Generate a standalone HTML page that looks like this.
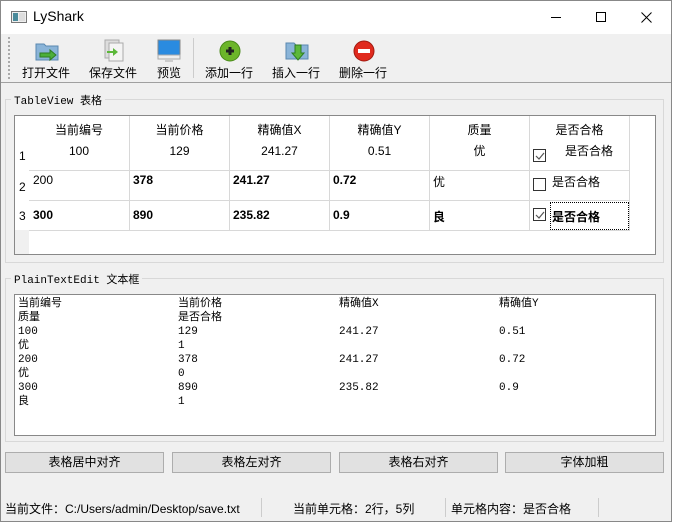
<!DOCTYPE html>
<html><head><meta charset="utf-8">
<style>
*{margin:0;padding:0;box-sizing:border-box}
body{width:674px;height:525px;background:#fff;font-family:"Liberation Sans","Noto Sans CJK SC",sans-serif;font-size:12px;color:#000;position:relative;overflow:hidden}
.a{position:absolute}
.win{left:0;top:0;width:672px;height:522px;border:1px solid #888;background:#f0f0f0}
.title{left:1px;top:1px;width:670px;height:33px;background:#fff}
.tb{font-size:12px;text-align:center;white-space:nowrap}
.gb{border:1px solid #d8d8d8}
.gt{background:#f0f0f0;font-family:"Liberation Mono","Noto Sans CJK SC",monospace;font-size:11px;padding:0 3px}
.cell{position:absolute;border-right:1px solid #d8d8d8;border-bottom:1px solid #d8d8d8;background:#fff;font-size:12px}
.b{font-weight:bold}
.chk{position:absolute;width:13px;height:13px;border:1px solid #333;background:#fff}
.te{font-family:"Liberation Mono","Noto Sans CJK SC",monospace;font-size:11px;line-height:14px;white-space:pre}
.btn{top:452px;height:21px;border:1px solid #adadad;background:#e1e1e1;text-align:center;line-height:19px;font-size:12px}
.sb{top:500px;font-size:12px}
</style></head><body>
<div class="a win"></div>
<div class="a title"></div>
<svg class="a" style="left:11px;top:11px" width="16" height="12"><rect x="0.5" y="0.5" width="15" height="11" fill="#eee" stroke="#777"/><rect x="2" y="2" width="5" height="8" fill="#4a8a9a"/><rect x="8" y="2" width="6" height="8" fill="#ddd"/></svg>
<div class="a" style="left:33px;top:8px;font-size:14px">LyShark</div>
<div class="a" style="left:551px;top:17px;width:10px;height:1px;background:#000"></div>
<div class="a" style="left:596px;top:12px;width:10px;height:10px;border:1px solid #000"></div>
<svg class="a" style="left:641px;top:12px" width="11" height="11"><path d="M0.5 0.5L10.5 10.5M10.5 0.5L0.5 10.5" stroke="#000" stroke-width="1"/></svg>
<!-- toolbar -->
<div class="a" style="left:1px;top:82px;width:670px;height:1px;background:#a0a0a0"></div>
<div class="a" style="left:8px;top:37px;width:2px;height:42px;border-left:2px dotted #aaa"></div>
<div class="a" style="left:193px;top:38px;width:1px;height:40px;background:#ccc"></div>
<svg class="a" style="left:35px;top:40px" width="26" height="22"><path d="M1 4h8l2 2h12v14H1z" fill="#8ab4d8" stroke="#5a88b0"/><path d="M5 13h10v-3l6 5-6 5v-3H5z" fill="#4caf3a" stroke="#2e7d22"/></svg>
<svg class="a" style="left:102px;top:39px" width="24" height="24"><rect x="3" y="1" width="14" height="18" fill="#ddd" stroke="#aaa"/><rect x="7" y="4" width="14" height="18" fill="#f4f4f4" stroke="#aaa"/><path d="M5 12h6v-3l5 4-5 4v-3H5z" fill="#5cb83a"/></svg>
<svg class="a" style="left:157px;top:39px" width="24" height="24"><rect x="1" y="1" width="22" height="15" fill="#2a8be0" stroke="#888"/><rect x="1" y="16" width="22" height="4" fill="#eee" stroke="#aaa"/><rect x="8" y="20" width="8" height="3" fill="#ccc"/></svg>
<svg class="a" style="left:219px;top:40px" width="22" height="22"><circle cx="11" cy="11" r="10" fill="#6cb52a" stroke="#4a8a1a"/><path d="M7 11h8M11 7v8" stroke="#222" stroke-width="3"/></svg>
<svg class="a" style="left:285px;top:39px" width="26" height="24"><path d="M1 4h8l2 2h12v14H1z" fill="#8ab4d8" stroke="#5a88b0"/><path d="M10 6v8h-3l6 7 6-7h-3V6z" fill="#5cb83a" stroke="#2e7d22"/></svg>
<svg class="a" style="left:353px;top:40px" width="22" height="22"><circle cx="11" cy="11" r="10" fill="#e02a1e" stroke="#a01a10"/><rect x="5" y="9" width="12" height="4" fill="#fff"/></svg>
<div class="a tb" style="left:22px;top:64px">打开文件</div>
<div class="a tb" style="left:89px;top:64px">保存文件</div>
<div class="a tb" style="left:157px;top:64px">预览</div>
<div class="a tb" style="left:205px;top:64px">添加一行</div>
<div class="a tb" style="left:272px;top:64px">插入一行</div>
<div class="a tb" style="left:339px;top:64px">删除一行</div>
<!-- group 1 -->
<div class="a gb" style="left:5px;top:99px;width:659px;height:164px"></div>
<div class="a gt" style="left:11px;top:92px">TableView 表格</div>
<div class="a" style="left:14px;top:115px;width:642px;height:140px;border:1px solid #888;background:#fff"></div>
<div class="a" style="left:15px;top:116px;width:14px;height:138px;background:#f0f0f0"></div>
<div class="a" style="left:15px;top:116px;width:14px;height:114px;background:#fff"></div>
<div class="a" style="left:19px;top:149px">1</div>
<div class="a" style="left:19px;top:180px">2</div>
<div class="a" style="left:19px;top:209px">3</div>
<!-- row1 -->
<div class="cell" style="left:29px;top:116px;width:101px;height:55px;text-align:center;line-height:21px;padding-top:4px">当前编号<br>100</div>
<div class="cell" style="left:130px;top:116px;width:100px;height:55px;text-align:center;line-height:21px;padding-top:4px">当前价格<br>129</div>
<div class="cell" style="left:230px;top:116px;width:100px;height:55px;text-align:center;line-height:21px;padding-top:4px">精确值X<br>241.27</div>
<div class="cell" style="left:330px;top:116px;width:100px;height:55px;text-align:center;line-height:21px;padding-top:4px">精确值Y<br>0.51</div>
<div class="cell" style="left:430px;top:116px;width:100px;height:55px;text-align:center;line-height:21px;padding-top:4px">质量<br>优</div>
<div class="cell" style="left:530px;top:116px;width:100px;height:55px;text-align:center;line-height:21px;padding-top:4px">是否合格</div>
<div class="a" style="left:565px;top:142px">是否合格</div>
<!-- row2 -->
<div class="cell" style="left:29px;top:171px;width:101px;height:30px;padding:2px 4px">200</div>
<div class="cell b" style="left:130px;top:171px;width:100px;height:30px;padding:2px 3px">378</div>
<div class="cell b" style="left:230px;top:171px;width:100px;height:30px;padding:2px 3px">241.27</div>
<div class="cell b" style="left:330px;top:171px;width:100px;height:30px;padding:2px 3px">0.72</div>
<div class="cell" style="left:430px;top:171px;width:100px;height:30px;padding:2px 3px">优</div>
<div class="cell" style="left:530px;top:171px;width:100px;height:30px;padding:2px 22px">是否合格</div>
<!-- row3 -->
<div class="cell b" style="left:29px;top:201px;width:101px;height:30px;padding:7px 4px">300</div>
<div class="cell b" style="left:130px;top:201px;width:100px;height:30px;padding:7px 3px">890</div>
<div class="cell b" style="left:230px;top:201px;width:100px;height:30px;padding:7px 3px">235.82</div>
<div class="cell b" style="left:330px;top:201px;width:100px;height:30px;padding:7px 3px">0.9</div>
<div class="cell b" style="left:430px;top:201px;width:100px;height:30px;padding:7px 3px">良</div>
<div class="cell b" style="left:530px;top:201px;width:100px;height:30px"></div>
<div class="a b" style="left:550px;top:202px;width:79px;height:28px;border:1px dotted #000;padding:5px 1px">是否合格</div>
<div class="chk" style="left:533px;top:149px"></div>
<svg class="a" style="left:535px;top:151px" width="10" height="10"><path d="M1 5l3 3 5-6" fill="none" stroke="#555" stroke-width="1.2"/></svg>
<div class="chk" style="left:533px;top:178px"></div>
<div class="chk" style="left:533px;top:208px"></div>
<svg class="a" style="left:535px;top:210px" width="10" height="10"><path d="M1 5l3 3 5-6" fill="none" stroke="#555" stroke-width="1.2"/></svg>
<!-- group 2 -->
<div class="a gb" style="left:5px;top:278px;width:659px;height:164px"></div>
<div class="a gt" style="left:11px;top:271px">PlainTextEdit 文本框</div>
<div class="a" style="left:14px;top:294px;width:642px;height:142px;border:1px solid #888;background:#fff"></div>
<div class="a te" style="left:18px;top:297px">当前编号
质量
100
优
200
优
300
良</div>
<div class="a te" style="left:178px;top:297px">当前价格
是否合格
129
1
378
0
890
1</div>
<div class="a te" style="left:339px;top:297px">精确值X

241.27

241.27

235.82</div>
<div class="a te" style="left:499px;top:297px">精确值Y

0.51

0.72

0.9</div>
<!-- buttons -->
<div class="a btn" style="left:5px;width:159px">表格居中对齐</div>
<div class="a btn" style="left:172px;width:159px">表格左对齐</div>
<div class="a btn" style="left:339px;width:159px">表格右对齐</div>
<div class="a btn" style="left:505px;width:159px">字体加粗</div>
<!-- status -->
<div class="a sb" style="left:5px">当前文件：C:/Users/admin/Desktop/save.txt</div>
<div class="a" style="left:261px;top:498px;width:1px;height:19px;background:#ccc"></div>
<div class="a sb" style="left:293px">当前单元格：2行，5列</div>
<div class="a" style="left:445px;top:498px;width:1px;height:19px;background:#ccc"></div>
<div class="a sb" style="left:451px">单元格内容：是否合格</div>
<div class="a" style="left:598px;top:498px;width:1px;height:19px;background:#ccc"></div>
</body></html>
